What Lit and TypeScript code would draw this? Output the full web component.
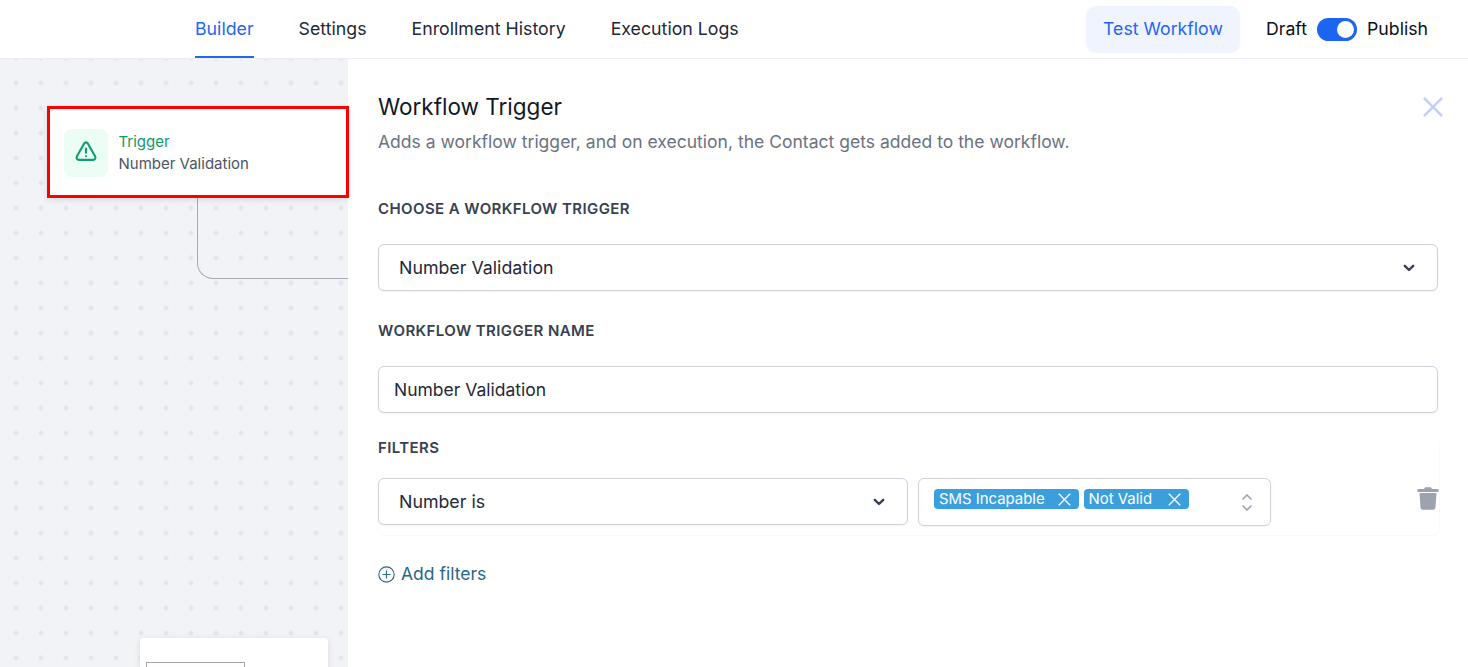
import { LitElement, html, css } from "lit";
import { customElement } from "lit/decorators.js";

const chevron = html`<svg class="chev" width="20" height="20" viewBox="0 0 20 20" fill="none"><path d="M5.800 7.800 10 12l4.200-4.200" stroke="#374151" stroke-width="2.400" stroke-linecap="round" stroke-linejoin="round"/></svg>`;
const x = (cls: string) => html`<svg class=${cls} viewBox="0 0 12 12" fill="none"><path d="M1 1l10 10M11 1 1 11" stroke="currentColor" stroke-width="1.200" stroke-linecap="round"/></svg>`;

@customElement("app-root")
export class AppRoot extends LitElement {
  static styles = css`
    :host { display: block; width: 1468px; height: 667px; overflow: hidden; background: #fff; font-family: Inter, "Noto Sans", sans-serif; color: #111827; }
    * { box-sizing: border-box; }
    .top { height: 59px; border-bottom: 1px solid #eceef2; display: flex; align-items: stretch; justify-content: space-between; padding: 0 40px 0 195px; background: #fff; }
    .tabs { display: flex; gap: 45px; }
    .tab { font-size: 17.750px; line-height: 58px; height: 58px; color: #1f2937; position: relative; font-weight: 400; }
    .tab.on { color: #1f66f2; border-bottom: 2px solid #1f66f2; }
    .actions { display: flex; align-items: center; font-size: 17.700px; color: #0b0f19; }
    .actions span { padding-bottom: 2px; }
    .test { height: 46px; width: 154px; margin: 0 26px 0 0; padding-bottom: 2px; border-radius: 10px; background: #eff4ff; color: #1f66f2; display: flex; align-items: center; justify-content: center; box-shadow: 0 1px 2px rgba(16,24,40,.05); }
    .switch { width: 40px; height: 23px; margin: 0 10px; border-radius: 12px; background: #1c64f2; display: flex; align-items: center; justify-content: flex-end; padding-right: 3px; }
    .knob { width: 17px; height: 17px; border-radius: 50%; background: #fff; }
    .body { display: flex; height: 608px; }
    .canvas { width: 348px; flex: none; position: relative; background-color: #f2f3f7; background-image: radial-gradient(circle at center, #e4e5e8 2px, transparent 2.600px); background-size: 25px 25px; background-position: 3.500px 11.500px; }
    .line { position: absolute; left: 197px; top: 139px; width: 151px; height: 81px; border-left: 1px solid #a9abb3; border-bottom: 1px solid #a9abb3; border-bottom-left-radius: 16px; }
    .node { position: absolute; left: 47px; top: 47px; width: 302px; height: 92px; background: #fff; border: 3px solid #f00; display: flex; align-items: center; padding: 2px 0 0 14px; gap: 10.500px; z-index: 2; box-shadow: 0 2px 6px rgba(16,24,40,.1); }
    .ico { width: 44px; height: 48px; border-radius: 8px; background: #ecfdf5; display: flex; align-items: center; justify-content: center; }
    .nt { font-size: 15px; line-height: 22px; color: #0b9a6a; font-weight: 420; }
    .ns { font-size: 15px; line-height: 22px; color: #4b5563; }
    .card { position: absolute; left: 140px; top: 579px; width: 188px; height: 60px; background: #fff; border-radius: 4px; box-shadow: 0 1px 6px rgba(16,24,40,.1); }
    .card i { position: absolute; left: 6px; top: 24px; width: 99px; height: 40px; border: 1px solid #a2a4b4; display: block; }
    .panel { flex: 1; position: relative; padding: 30px 30px 0; background: #fff; }
    .close { position: absolute; right: 26px; top: 38px; width: 20px; height: 20px; color: #c3cffa; }
    .close path { stroke-width: 1.500; }
    h1 { margin: 3px 0 0; font-size: 22.500px; line-height: 30px; font-weight: 400; color: #111827; }
    .sub { margin-top: 8px; font-size: 17.550px; line-height: 24px; color: #6b7280; }
    .label { font-size: 15px; line-height: 20px; font-weight: 600; letter-spacing: .4px; color: #374151; text-transform: uppercase; }
    .l1 { margin-top: 45px; }
    .l2 { margin-top: 30px; }
    .field { height: 47px; border: 1px solid #d1d1de; border-radius: 6px; font-size: 17.800px; color: #1f2937; display: flex; align-items: center; justify-content: space-between; padding: 0 18px 0 20px; box-shadow: 0 1px 2px rgba(16,24,40,.05); background: #fff; }
    .f1 { margin: 25px 1px 0 0; padding-right: 18px; }
    .f2 { margin: 25px 1px 0 0; padding-left: 15px; font-size: 17.500px; }
    .filters { margin-top: 25px; height: 97px; width: 1061px; border-radius: 8px; box-shadow: 0 1px 2px rgba(16,24,40,.03), 1px 0 1px rgba(16,24,40,.015); }
    .row { display: flex; gap: 10px; margin-top: 20px; align-items: flex-start; position: relative; }
    .r1 { width: 530px; }
    .multi { width: 353px; height: 48px; border: 1px solid #d1d1de; border-radius: 6px; padding: 10px 0 0 15px; display: flex; gap: 5px; align-items: flex-start; position: relative; box-shadow: 0 1px 2px rgba(16,24,40,.05); }
    .tag { height: 20px; border-radius: 4px; background: #3b9fde; color: #fff; font-size: 14.900px; line-height: 20px; padding: 0 5px; display: flex; align-items: center; justify-content: space-between; }
    .tag svg { width: 13px; height: 13px; margin-left: 13px; margin-right: 3px; }
    .tag.t2 svg { margin-left: 16px; }
    .updown { position: absolute; right: 16px; top: 13px; }
    .trash { position: absolute; left: 1038px; top: 7px; }
    .add { margin-top: 27px; display: flex; align-items: center; gap: 6px; font-size: 17.500px; line-height: 24px; color: #2b6584; }
  `;

  render() {
    return html`
      <div class="top">
        <div class="tabs">
          <div class="tab on">Builder</div><div class="tab">Settings</div><div class="tab">Enrollment History</div><div class="tab">Execution Logs</div>
        </div>
        <div class="actions">
          <div class="test">Test Workflow</div>
          <span>Draft</span><div class="switch"><div class="knob"></div></div><span>Publish</span>
        </div>
      </div>
      <div class="body">
        <div class="canvas">
          <div class="line"></div>
          <div class="node">
            <div class="ico"><svg width="24" height="24" viewBox="0 0 24 24" fill="none" stroke="#0e9f6e" stroke-width="2.100" stroke-linecap="round" stroke-linejoin="round"><path d="M12 7.500v4.300M12 15.300h.01M10.200 2.400 2.900 15.300C2 17 3 18.900 5 18.900h14c2 0 3-1.900 2.100-3.600L13.800 2.400a2.100 2.100 0 0 0-3.600 0Z"/></svg></div>
            <div><div class="nt">Trigger</div><div class="ns">Number Validation</div></div>
          </div>
          <div class="card"><i></i></div>
        </div>
        <div class="panel">
          ${x("close")}
          <h1>Workflow Trigger</h1>
          <div class="sub">Adds a workflow trigger, and on execution, the Contact gets added to the workflow.</div>
          <div class="label l1">Choose a workflow trigger</div>
          <div class="field f1"><span>Number Validation</span>${chevron}</div>
          <div class="label l2">Workflow trigger name</div>
          <div class="field f2"><span>Number Validation</span></div>
          <div class="filters">
            <div class="label">Filters</div>
            <div class="row">
              <div class="field r1"><span>Number is</span>${chevron}</div>
              <div class="multi">
                <div class="tag">SMS Incapable${x("")}</div>
                <div class="tag t2">Not Valid${x("")}</div>
                <svg class="updown" width="14" height="20" viewBox="0 0 14 20" fill="none" stroke="#9ca3af" stroke-width="1.700" stroke-linecap="round" stroke-linejoin="round"><path d="M3 7l4-4 4 4M3 14l4 4 4-4"/></svg>
              </div>
              <svg class="trash" width="24" height="26" viewBox="0 0 24 26" fill="#9ca3af"><path d="M1.500 4h6.500l1-1.800h6l1 1.800h6.500V7h-21ZM3.500 8h17l-1 14.500a2.400 2.400 0 0 1-2.400 2.300H6.900a2.400 2.400 0 0 1-2.400-2.300Z"/></svg>
            </div>
          </div>
          <div class="add">
            <svg width="17" height="17" viewBox="0 0 16 16" fill="none" stroke="#2b6584" stroke-width="1.050"><circle cx="8" cy="8" r="7.200"/><path d="M8 4.200v7.600M4.200 8h7.600"/></svg>
            <span>Add filters</span>
          </div>
        </div>
      </div>
    `;
  }
}
